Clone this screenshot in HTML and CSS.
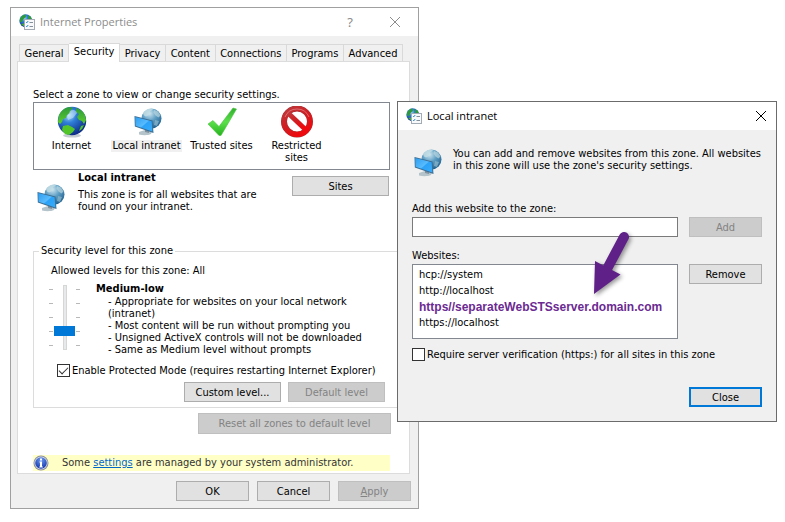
FILE: index.html
```html
<!DOCTYPE html>
<html lang="en">
<head>
    <meta charset="UTF-8">
    <meta name="viewport" content="width=device-width, initial-scale=1.0">
    <title>Internet Properties</title>
    <link rel="stylesheet" href="styles.css">
</head>
<body>
    <svg class="defs" width="0" height="0" aria-hidden="true">
        <defs>
            <radialGradient id="sea" cx="0.38" cy="0.3" r="0.75">
                <stop offset="0" stop-color="#a9dcf8"/>
                <stop offset="0.35" stop-color="#2f7fd8"/>
                <stop offset="1" stop-color="#0a2480"/>
            </radialGradient>
            <radialGradient id="pale" cx="0.4" cy="0.25" r="0.8">
                <stop offset="0" stop-color="#cfe6f0"/>
                <stop offset="0.45" stop-color="#5f9fc4"/>
                <stop offset="1" stop-color="#1c5c8c"/>
            </radialGradient>
            <linearGradient id="land" x1="0" y1="0" x2="0" y2="1">
                <stop offset="0" stop-color="#2c9a3c"/>
                <stop offset="1" stop-color="#5fce28"/>
            </linearGradient>
            <linearGradient id="glass" x1="0" y1="0" x2="1" y2="1">
                <stop offset="0" stop-color="#2c9df0"/>
                <stop offset="0.5" stop-color="#58bbfd"/>
                <stop offset="0.55" stop-color="#2ba2f8"/>
                <stop offset="1" stop-color="#3badfa"/>
            </linearGradient>
            <linearGradient id="tick" x1="0" y1="0" x2="0" y2="1">
                <stop offset="0" stop-color="#2fae2c"/>
                <stop offset="0.5" stop-color="#5be04a"/>
                <stop offset="1" stop-color="#27b31f"/>
            </linearGradient>
            <linearGradient id="ban" x1="0" y1="0" x2="0.6" y2="1">
                <stop offset="0" stop-color="#c0393c"/>
                <stop offset="0.5" stop-color="#cf2024"/>
                <stop offset="1" stop-color="#ee0a0e"/>
            </linearGradient>
            <radialGradient id="badge" cx="0.5" cy="0.25" r="0.8">
                <stop offset="0" stop-color="#6d9af0"/>
                <stop offset="1" stop-color="#0b2ea6"/>
            </radialGradient>
        </defs>
        <symbol id="globe" viewBox="0 0 32 32">
            <ellipse cx="16" cy="29.5" rx="9" ry="2" fill="#c4ccd2"/>
            <circle cx="16" cy="15" r="14.2" fill="url(#sea)"/>
            <path d="M3 9C5 4.500 9 1.600 14 1l3 1-2 2-1 3-3 2-1 3-3 1-1 3-2 2-2-2z" fill="url(#land)"/>
            <path d="M20 2c4 .8 7.500 3.500 9 7l1 5-2 4-2-3-3-1-2-3 2-3-3-2z" fill="url(#land)"/>
            <path d="M7 20l5-1 4 2 3 2-2 3-4 3-4-1-3-4z" fill="#52c52a"/>
            <path d="M25 20l3-1-2 4-3 2z" fill="#52c52a"/>
            <path d="M14 5c3-2 6-1 7 2l-4 5-5 2-1-3z" fill="#d7f0fb" opacity="0.5"/>
        </symbol>
        <symbol id="intranet" viewBox="0 0 28 28">
            <circle cx="17.500" cy="10.500" r="10" fill="url(#pale)"/>
            <path d="M9 5c2-3 5-4.500 8-4.500l2 1-3 2v3l-4 2-2-1z" fill="#c3dde4" opacity="0.8"/>
            <path d="M20 2l4 1.500 2.500 4-2 2-3-2-2-3z" fill="#b9d5de" opacity="0.7"/>
            <path d="M21 12l4 1-2 5-3-1z" fill="#91bbcc" opacity="0.7"/>
            <path d="M5 24l6-2 7 1.500-1 2.500c-3 1.500-8 1.500-12 .5z" fill="#b5c3cb"/>
            <path d="M11 20l4 1v4l-4-1z" fill="#7f929d"/>
            <path d="M.5 8L18.500 12.500 19.500 25 .8 18.500z" fill="#3b6d91"/>
            <path d="M1.200 9L17.600 13.200 18.400 23.600 1.600 17.800z" fill="url(#glass)"/>
        </symbol>
        <symbol id="options" viewBox="0 0 16 16">
            <circle cx="6.700" cy="6.700" r="6.400" fill="url(#sea)"/>
            <path d="M1 4.500C2.300 2 4 .6 6.500.4L7 3 4.500 5 3 8 1 8z" fill="#2f9a3b"/>
            <path d="M9 1l3 2 1 3-2 1-2-2z" fill="#2f9a3b"/>
            <path d="M2 10l3-.5.5 3.300z" fill="#45b32d"/>
            <rect x="5.500" y="5.500" width="10" height="10" fill="#f8f9fa" stroke="#a3acb4"/>
            <path d="M7 8l.8.8L9.200 7M7 12l.8.8 1.400-1.800" fill="none" stroke="#278cc8"/>
            <path d="M10.500 8.500h3.500M10.500 12.500h3.500" stroke="#84919b"/>
        </symbol>
    </svg>

    <section class="window properties">
        <header class="titlebar">
            <svg class="icon-small"><use href="#options"/></svg>
            <h1>Internet Properties</h1>
            <button class="caption help" aria-label="Help">?</button>
            <button class="caption" aria-label="Close">
                <svg width="10" height="10" viewBox="0 0 10 10"><path d="M0 0l10 10M10 0L0 10" stroke="currentColor"/></svg>
            </button>
        </header>

        <nav class="tabs">
            <button>General</button>
            <button class="active">Security</button>
            <button>Privacy</button>
            <button>Content</button>
            <button>Connections</button>
            <button>Programs</button>
            <button>Advanced</button>
        </nav>

        <main class="panel">
            <p class="prompt">Select a zone to view or change security settings.</p>
            <div class="zones">
                <button class="zone">
                    <svg width="32" height="32"><use href="#globe"/></svg>
                    <span>Internet</span>
                </button>
                <button class="zone selected">
                    <svg width="32" height="28" viewBox="0 0 32 28"><use href="#intranet" x="3" width="28" height="28"/></svg>
                    <span>Local intranet</span>
                </button>
                <button class="zone">
                    <svg width="32" height="32" viewBox="0 0 32 32">
                        <path d="M2 18l5-3.500 6 6L27 2l3.500 1L15 29.500h-2z" fill="url(#tick)" stroke="#4bbd43" stroke-width="0.600"/>
                    </svg>
                    <span>Trusted sites</span>
                </button>
                <button class="zone">
                    <svg width="32" height="32" viewBox="0 0 32 32">
                        <circle cx="16" cy="15.500" r="13" fill="#fff" stroke="#9e3437" stroke-width="6"/>
                        <circle cx="16" cy="15.500" r="13" fill="none" stroke="url(#ban)" stroke-width="5"/>
                        <path d="M7 7l18 17" stroke="url(#ban)" stroke-width="5"/>
                        <path d="M4 11a13 13 0 0 1 24 0" fill="none" stroke="#e89a9b" stroke-width="1" opacity="0.600"/>
                    </svg>
                    <span>Restricted sites</span>
                </button>
            </div>

            <div class="zone-info">
                <svg class="icon-zone"><use href="#intranet"/></svg>
                <div class="zone-text">
                    <h2>Local intranet</h2>
                    <p>This zone is for all websites that are found on your intranet.</p>
                </div>
                <button class="btn wide">Sites</button>
            </div>

            <fieldset class="levels">
                <legend>Security level for this zone</legend>
                <label for="level">Allowed levels for this zone: All</label>
                <div class="level-row">
                    <div class="slider">
                        <div class="ticks"><i></i><i></i><i></i><i></i><i></i></div>
                        <input type="range" id="level" min="0" max="4" value="1">
                        <div class="ticks"><i></i><i></i><i></i><i></i><i></i></div>
                    </div>
                    <div class="level-text">
                        <h2>Medium-low</h2>
                        <p>- Appropriate for websites on your local network<br>(intranet)</p>
                        <p>- Most content will be run without prompting you</p>
                        <p>- Unsigned ActiveX controls will not be downloaded</p>
                        <p>- Same as Medium level without prompts</p>
                    </div>
                </div>
                <div class="check protected">
                    <input type="checkbox" id="protected" checked>
                    <label for="protected">Enable Protected Mode (requires restarting Internet Explorer)</label>
                </div>
                <div class="level-buttons">
                    <button class="btn wide">Custom level...</button>
                    <button class="btn wide" disabled>Default level</button>
                </div>
            </fieldset>

            <button class="btn reset" disabled>Reset all zones to default level</button>

            <p class="notice">
                <svg width="16" height="16" viewBox="0 0 16 16">
                    <circle cx="8" cy="8" r="7.500" fill="#8b8f9b"/>
                    <circle cx="8" cy="8" r="6.500" fill="#dfe4ee"/>
                    <circle cx="8" cy="8" r="5.800" fill="url(#badge)"/>
                    <path d="M7 3.500h2v2H7zM6.500 6.500H9v5h.8v1H6.300v-1H7v-4h-.5z" fill="#fff"/>
                </svg>
                <span>Some <a href="#">settings</a> are managed by your system administrator.</span>
            </p>
        </main>

        <footer class="actions">
            <button class="btn">OK</button>
            <button class="btn">Cancel</button>
            <button class="btn" disabled><u>A</u>pply</button>
        </footer>
    </section>

    <section class="window intranet">
        <header class="titlebar">
            <svg class="icon-small"><use href="#options"/></svg>
            <h1>Local intranet</h1>
            <button class="caption" aria-label="Close">
                <svg width="10" height="10" viewBox="0 0 10 10"><path d="M0 0l10 10M10 0L0 10" stroke="currentColor"/></svg>
            </button>
        </header>

        <div class="dialog">
            <div class="intro">
                <svg class="icon-zone"><use href="#intranet"/></svg>
                <p>You can add and remove websites from this zone. All websites in this zone will use the zone's security settings.</p>
            </div>

            <form class="sites">
                <label for="site">Add this website to the zone:</label>
                <input type="text" id="site">
                <button type="button" class="btn" disabled>Add</button>
                <label for="websites">Websites:</label>
                <div class="list">
                    <select id="websites" size="4">
                        <option>hcp://system</option>
                        <option>http://localhost</option>
                        <option class="added">https//separateWebSTSserver.domain.com</option>
                        <option>https://localhost</option>
                    </select>
                    <svg class="arrow" width="44" height="70" viewBox="0 0 44 70">
                        <path d="M34 7L17 39" stroke="#5f2187" stroke-width="10" stroke-linecap="round"/>
                        <path d="M5 31L30.500 44.500 4 64z" fill="#5f2187"/>
                    </svg>
                </div>
                <button type="button" class="btn">Remove</button>
            </form>

            <div class="check">
                <input type="checkbox" id="verify">
                <label for="verify">Require server verification (https:) for all sites in this zone</label>
            </div>

            <div class="close-row">
                <button class="btn default">Close</button>
            </div>
        </div>
    </section>
</body>
</html>
```

FILE: styles.css
```css
* { box-sizing: border-box; }
body { margin: 0; padding: 7px 0 0 10px; background: #fff; color: #000; font: 11px/12px Tahoma, "DejaVu Sans Condensed", "Noto Sans", sans-serif; }
h1, h2, p { margin: 0; font-size: inherit; }
button, input, select { font: inherit; color: inherit; margin: 0; }
.defs { position: absolute; }

/* windows */
.window { background: #f0f0f0; border: 1px solid #a0a0a0; }
.properties { margin-right: 366px; }
.intranet { position: absolute; left: 397px; right: 8px; top: 101px; border-color: #6b6b6b; }
.titlebar { display: flex; align-items: center; height: 28px; padding: 0 8px; background: #fff; }
.titlebar h1 { flex: 1; margin-left: 5px; font: 11px/16px "Open Sans", "Noto Sans", sans-serif; }
.properties .titlebar { color: #8c8c8c; }
.icon-small { width: 16px; height: 16px; }
.icon-zone { flex: none; width: 28px; height: 28px; }
.caption { display: flex; align-items: center; justify-content: center; width: 30px; height: 20px; padding: 0; border: 0; background: none; }
.caption.help { margin-right: 15px; font: 13px/16px "Noto Sans", sans-serif; }
.intranet .caption { margin-right: -8px; }

/* buttons */
.btn { width: 73px; height: 20px; padding: 1px 0 0; border: 1px solid #adadad; background: #e1e1e1; }
.btn.wide { width: 97px; }
.btn:disabled { background: #ccc; border-color: #bfbfbf; color: #838383; }
.btn.default { border: 2px solid #0078d7; }

/* tabs */
.tabs { display: flex; align-items: flex-end; padding: 7px 15px 0 8px; }
.tabs button { flex: 1 1 auto; height: 17px; padding: 1px 3px 0; border: 1px solid #d9d9d9; border-bottom: 0; border-left-width: 0; background: #f0f0f0; white-space: nowrap; }
.tabs button:first-child { border-left-width: 1px; }
.tabs .active { height: 19px; margin-bottom: -1px; padding-bottom: 3px; background: #fff; position: relative; }

.panel { margin: 0 8px 0 6px; padding: 26px 9px 2px 15px; background: #fff; border: 1px solid #dcdcdc; }
.prompt { height: 14px; line-height: 14px; }
.zones { display: flex; height: 68px; margin-right: 10px; border: 1px solid #828790; }
.zone { display: flex; flex-direction: column; align-items: center; width: 75px; padding: 3px 0 0; border: 0; background: none; line-height: 12px; }
.zone svg { flex: none; height: 32px; }
.zone span { margin-top: 2px; padding: 0 1px; white-space: nowrap; }
.zone:last-child span { width: 56px; white-space: normal; }
.zone.selected span { background: #f0f0f0; }

.zone-info { display: flex; margin-right: 11px; padding-left: 4px; }
.zone-info .icon-zone { margin: 14px 13px 0 0; }
.zone-text { flex: 1; padding: 1px 22px 0 0; }
.zone-text h2 { line-height: 14px; margin-bottom: 4px; }
.zone-info .btn { margin-top: 6px; }

/* security level */
.levels { margin: 31px 0 0; padding: 6px 14px 5px 17px; border: 1px solid #dcdcdc; }
.levels legend { margin-left: -12px; padding: 0 2px; line-height: 14px; }
.levels > label { display: block; line-height: 14px; }
.level-row { display: flex; gap: 16px; margin: 4px 0 0 -2px; }
.slider { display: flex; gap: 1px; margin-top: 3px; height: 65px; }
.ticks { display: flex; flex-direction: column; justify-content: space-between; padding: 4px 0; }
.ticks i { width: 4px; height: 1px; background: #b8b8b8; }
.slider input { appearance: none; writing-mode: vertical-lr; direction: rtl; width: 21px; height: 65px; background: none; }
.slider input::-webkit-slider-runnable-track { width: 4px; margin: 0 auto; border: 1px solid #d6d6d6; background: #e7eaea; }
.slider input::-webkit-slider-thumb { appearance: none; width: 21px; height: 10px; margin-left: -10px; background: #0078d7; }
.level-text h2 { line-height: 14px; }
.level-text p { padding-left: 12px; white-space: nowrap; }
.check { display: flex; align-items: center; gap: 2px; height: 14px; white-space: nowrap; }
.check label { padding-top: 1px; }
.check input { appearance: none; flex: none; display: grid; place-content: center; width: 13px; height: 13px; border: 1px solid #333; background: #fff; }
.check input:checked::before { content: ""; width: 8px; height: 4px; margin-bottom: 2px; border: solid #333; border-width: 0 0 1px 1px; transform: rotate(-45deg); }
.protected { margin: 7px 0 5px 6px; }
.level-buttons { display: flex; justify-content: flex-end; gap: 7px; }

.reset { display: block; width: 193px; height: 21px; margin: 5px 9px 0 auto; }
.notice { display: flex; align-items: center; gap: 13px; height: 16px; margin: 21px 10px 0 0; background: #ffffc6; color: #333; }
.notice a { color: #0066cc; }
.actions { display: flex; justify-content: flex-end; gap: 8px; padding: 7px; }

/* local intranet dialog */
.dialog { padding: 18px 14px 14px; }
.intro { display: flex; gap: 11px; padding-left: 2px; }
.intro .icon-zone { margin-top: 1px; }
.sites { display: grid; grid-template-columns: 1fr 73px; column-gap: 11px; margin-top: 25px; }
.sites label { grid-column: 1 / -1; line-height: 14px; margin-bottom: 1px; }
.sites input { height: 20px; min-width: 0; border: 1px solid #7a7a7a; background: #fff; }
.sites label[for="websites"] { margin-top: 12px; }
.list { position: relative; display: flex; height: 75px; }
.list select { width: 100%; padding: 3px 5px; border: 1px solid #828790; border-radius: 0; background: #fff; overflow: hidden; outline: 0; }
.list option { min-height: 0; height: 16px; padding: 0 1px; line-height: 16px; }
.list .added { font: bold 12px/16px Arial, "Liberation Sans", sans-serif; color: #6b2a92; }
.arrow { position: absolute; right: 44px; top: -34px; filter: drop-shadow(2px 2px 2px rgba(0, 0, 0, 0.4)); fill: none; pointer-events: none; }
.dialog > .check { margin-top: 8px; }
.close-row { display: flex; justify-content: flex-end; margin-top: 26px; }
```
